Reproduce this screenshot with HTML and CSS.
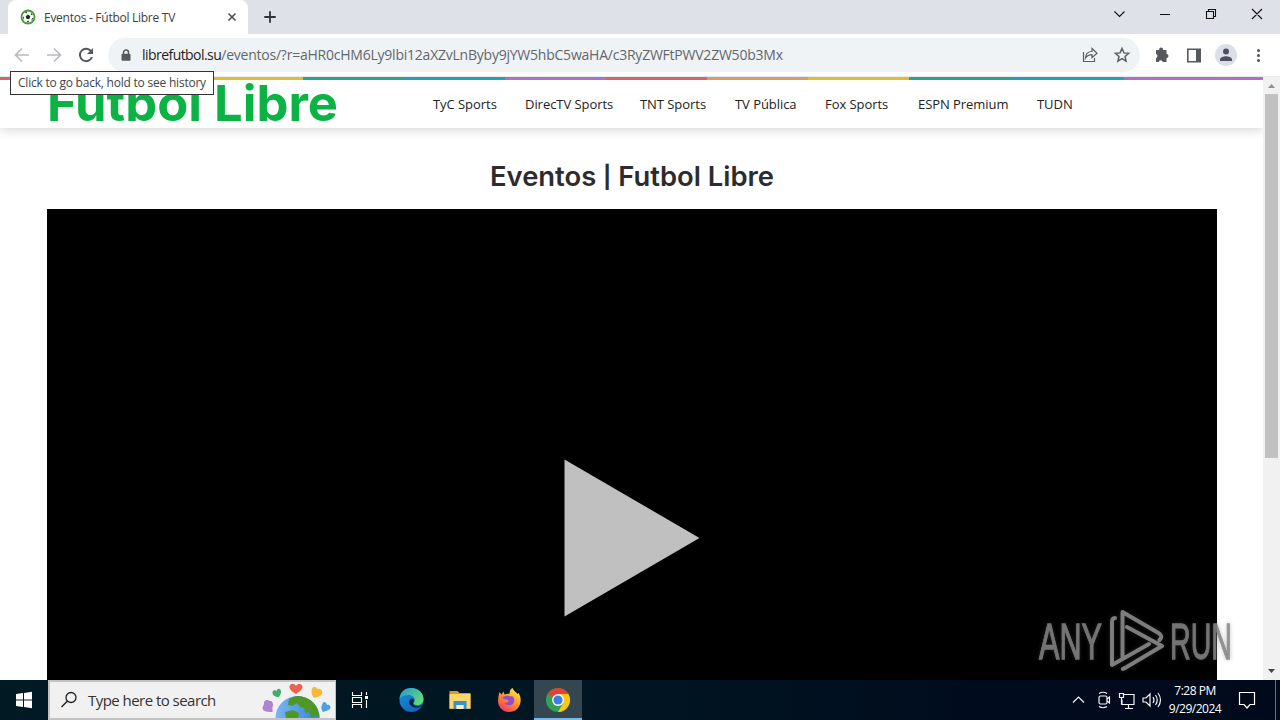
FILE: index.html
```html
<!DOCTYPE html>
<html lang="es">
<head>
<meta charset="utf-8">
<title>Eventos - Fútbol Libre TV</title>
<link rel="stylesheet" href="styles.css">
</head>
<body>
<div class="screen">
  <header class="tabstrip">
    <div class="tab">
      <svg class="favicon" viewBox="0 0 16 16"><circle cx="8" cy="8" r="7.4" fill="#3f9b2f"/><circle cx="8" cy="8" r="5.6" fill="#fff"/><path d="M8 5.5l2.3 1.7-.9 2.7H6.6l-.9-2.7zM5 3.5l2-1-.5 2zM11 3.8l1.9 2-1.7.2zM3 7.2l1.2 1.2L3.4 11zM6.5 12l2.8-.2L8 13.4zM12 9l1.2.5L11.4 12z" fill="#202820"/></svg>
      <span class="tab-title">Eventos - Fútbol Libre TV</span>
      <svg class="tab-close" viewBox="0 0 10 10"><path d="M1.5 1.5l7 7M8.500 1.500l-7 7" stroke="#4b4e52" stroke-width="1.6"/></svg>
    </div>
    <svg class="new-tab" viewBox="0 0 12 12"><path d="M6 .3v11.400M.3 6h11.400" stroke="#303238" stroke-width="1.8"/></svg>
    <svg class="window-controls" viewBox="0 0 160 34" fill="none" stroke="#111" stroke-width="1.100"><path d="M-.5 11.500l5 5 5-5M45 14.500h10"/><path d="M91.500 11.500h7v7h-7zM93.500 11.500v-2h7v7h-2M137 9l10 10M147 9l-10 10"/></svg>
  </header>
  <div class="toolbar">
    <svg class="nav-icons" viewBox="0 0 108 42" fill="none"><g stroke="#b9bbbe" stroke-width="1.700"><path d="M29 21H16M22 14.500L15.500 21l6.500 6.500M47 21h13M54 14.500l6.500 6.500-6.500 6.500"/></g><path d="M91.300 17.500A6.200 6.200 0 1 0 92 23" stroke="#55585c" stroke-width="2"/><path d="M93 14v6h-6z" fill="#55585c"/></svg>
    <div class="omnibox">
      <svg class="lock" viewBox="0 0 10 12"><path d="M2.500 5V3.500a2.500 2.500 0 0 1 5 0V5" fill="none" stroke="#55585c" stroke-width="1.500"/><rect x=".5" y="4.700" width="9" height="7" rx="1" fill="#55585c"/></svg>
      <span class="url"><span class="host">librefutbol.su</span><span class="path">/eventos/?r=aHR0cHM6Ly9lbi12aXZvLnByby9jYW5hbC5waHA/c3RyZWFtPWV2ZW50b3Mx</span></span>
      <svg class="omni-icons" viewBox="0 0 60 34" fill="none" stroke="#5b5f64" stroke-width="1.200"><path d="M3.500 14v9.500h11V20M5.500 20c.3-4 3-6.500 6.500-6.500v-3l5 4.700-5 4.500v-3c-3 0-4.800.8-6.500 3.300z"/><path stroke-width="1.500" d="M42 10.500l1.900 4.400 4.700.4-3.600 3.100 1.100 4.700-4.100-2.500-4.100 2.500 1.100-4.700-3.600-3.100 4.700-.4z"/></svg>
    </div>
    <svg class="toolbar-icons" viewBox="0 0 140 42"><path d="M16 16h3.200a2 2 0 1 1 3.800 0h3.500v4a2 2 0 1 1 0 4v4h-3.700a2.100 2.100 0 0 0-4.100 0H16v-4a2.100 2.100 0 0 0 0-4z" fill="#55585c"/><path d="M47.800 15.200h12.400v12.600H47.800z" fill="none" stroke="#55585c" stroke-width="1.600"/><path d="M56 15h5v13h-5z" fill="#55585c"/><circle cx="86" cy="21" r="11" fill="#dcdfe8"/><circle cx="86" cy="17.500" r="3" fill="#4c5063"/><path d="M80 27v-1.500c0-2 4-3.200 6-3.200s6 1.200 6 3.200V27z" fill="#4c5063"/><g fill="#505357"><circle cx="118.500" cy="16.500" r="1.500"/><circle cx="118.500" cy="21.500" r="1.500"/><circle cx="118.500" cy="26.500" r="1.500"/></g></svg>
  </div>
  <div class="viewport">
    <main class="page">
      <div class="stripe"></div>
      <div class="site-header">
        <svg class="logo" viewBox="0 0 300 48"><text x="-1" y="41" textLength="291" lengthAdjust="spacingAndGlyphs">Futbol Libre</text></svg>
        <nav class="menu"><a>TyC Sports</a><a>DirecTV Sports</a><a>TNT Sports</a><a>TV Pública</a><a>Fox Sports</a><a>ESPN Premium</a><a>TUDN</a></nav>
      </div>
      <svg class="heading" viewBox="0 0 284 40"><text x="0" y="27" textLength="284" lengthAdjust="spacingAndGlyphs">Eventos <tspan class="bar" dy="-1.500">|</tspan><tspan dy="1.500"> Futbol Libre</tspan></text></svg>
      <div class="player"><svg class="play" viewBox="0 0 136 158"><path d="M.5.500L135.500 79 .5 157.500z" fill="#c0c0c0"/></svg></div>
    </main>
    <div class="scrollbar"><svg class="arrow" viewBox="0 0 17 17"><path d="M5 11h7l-3.500-4z" fill="#909090"/></svg><div class="thumb"></div><svg class="arrow" viewBox="0 0 17 17"><path d="M5 6h7l-3.500 4z" fill="#444"/></svg></div>
  </div>
  <footer class="taskbar">
    <svg class="start" viewBox="0 0 48 40"><path d="M16 14l7-1v6.500h-7zM24 12.900l8-1.100v7.700h-8zM16 20.500h7V27l-7-1zM24 20.500h8v7.700l-8-1.100z" fill="#fff"/></svg>
    <div class="search">
      <svg class="magnifier" viewBox="0 0 18 18"><circle cx="11" cy="6.500" r="5" fill="none" stroke="#222" stroke-width="1.300"/><path d="M7.500 10L1.500 16" stroke="#222" stroke-width="1.400"/></svg>
      <span class="search-text">Type here to search</span>
      <svg class="globe" viewBox="0 0 72 36"><defs><clipPath id="earth"><circle cx="36.500" cy="36" r="22"/></clipPath><linearGradient id="sea"><stop stop-color="#7bb4f5"/><stop offset="1" stop-color="#3384d9"/></linearGradient></defs><circle cx="36.500" cy="36" r="22" fill="url(#sea)"/><g clip-path="url(#earth)" fill="#4e9826"><path d="M28 17l9-4 13 3 9 12v7l-5-2-3 3-3-6-4 1-1-5-4-1-3-4-5 3-4-1zM24 30l8-2 6 3-1 5H25z"/></g><path d="M35 12c-3-2-6.500-4-6.500-7 0-4 5-4 6.500-1 2-3 6.500-2.500 6.500 1 0 3-4 5-6.500 7z" fill="#ed624c"/><path d="M18 15c-4 0-7-2-6.500-5 .5-2 3-2.500 4-1 .5-3 4-3 4.500 0 .5 2-1 4-2 6z" fill="#42ae69"/><path d="M51 7c1.500-4 5-2 5 0 4-1 6 2 5 5-1 2-5 3-8 4-2-3-3.500-6-2-9z" fill="#f5b936"/><path d="M3 20c2-3 5-2 5-1 3-1 5 3 3.500 6v5c-4 0-10 0-10-4 0-2 2-3 1.500-6z" fill="#ae83cf"/><path d="M61 23c1-4 4-4 5 0 3-1 4 2 3 4-1 1-4 2-7 3-2-2-2-5-1-7z" fill="#4c9fe0"/></svg>
    </div>
    <svg class="task-view" viewBox="0 0 48 40" fill="none" stroke="#fff" stroke-width="1.100"><path d="M16.500 12v3.500h9V12M16.500 28v-3.500h9V28M16.500 17.500h9v5h-9zM30.500 12v3M30.500 20v8"/><path d="M29 16h3v3h-3z" fill="#fff" stroke="none"/></svg>
    <svg class="app edge" viewBox="0 0 48 40"><defs><linearGradient id="eg" y2=".7"><stop stop-color="#2596d8"/><stop offset="1" stop-color="#61dc72"/></linearGradient><linearGradient id="eb" x2=".7" y2="1"><stop stop-color="#1593dc"/><stop offset="1" stop-color="#1762b8"/></linearGradient></defs><circle cx="24" cy="20" r="12" fill="url(#eb)"/><path d="M12 19C12.500 11 18 8 24 8c7 0 12 5 12 11 0 4-3 6-6 6-3 0-5-1-4-2 3-3 1-7-4-8-4-.5-8 1-10 4z" fill="url(#eg)"/><path d="M26 22c-1 3 2 5 6 4l2.500-1c-2 3-6 3.500-9 2-4-2-5-6-2-8.500 2 0 4 1.500 2.500 3.500z" fill="#08263f"/></svg>
    <svg class="app" viewBox="0 0 48 40"><path d="M13 11h8l2 2h11v16H13z" fill="#d99b20"/><path d="M13 14h21v14.500H13z" fill="#fad66e"/><path d="M17 21h13v8h-3v-4h-7v4h-3z" fill="#3791ce"/><path d="M20 25h7v4h-7z" fill="#f7edd0"/></svg>
    <svg class="app" viewBox="0 0 48 40"><defs><linearGradient id="ff" x1=".8" x2=".2" y2="1"><stop stop-color="#fff044"/><stop offset=".45" stop-color="#ff9b28"/><stop offset="1" stop-color="#f02f64"/></linearGradient></defs><path d="M14 12l2 2.500 2-3 1 3c2-1 4-1 5-.5 0-3 1-5 3-6 1 3 4 4 5 6l1-1c2 3 2.500 6 2 9-1 6-5 10-11.500 10S12.500 27 12.500 21c0-3 .5-6 1.500-9z" fill="url(#ff)"/><path d="M17 17l5-1.500 3 1c3-1 5 3.500 3 6.500-2 3-7 3-9 0 3 0 4-1 4-3l-5-1z" fill="#914bd5"/></svg>
    <div class="active-app"><svg class="app" viewBox="0 0 48 40"><circle cx="24" cy="20" r="12" fill="#32a153"/><path d="M24 20L13.600 14A12 12 0 0 1 34.400 14z" fill="#e44234"/><path d="M24 14h10.400A12 12 0 0 1 24 32l5.200-9z" fill="#fbc817"/><circle cx="24" cy="20" r="5.900" fill="#fff"/><circle cx="24" cy="20" r="4.600" fill="#3b7eea"/></svg></div>
    <svg class="tray" viewBox="0 0 100 40" fill="none" stroke="#f3f5f7" stroke-width="1.200"><path d="M5 22.500l5.500-5.500 5.500 5.500"/><rect x="31" y="16" width="8" height="8" rx="1.500"/><path d="M39 19l2.500-2v6l-2.500-2M31 13.500q4-2.500 8 0M31 26.500q4 2.500 8 0M56 14.500h10v10H54v-5M60.500 25v3M57 28.500h8M51.500 13.500h4v4h-4zM53.500 17.500v7M75 18h3l4-4v12l-4-4h-3zM85 17q2 3 0 6M87.500 15q3.500 5 0 10M90 13q5 7 0 14"/></svg>
    <div class="clock"><span class="time">7:28 PM</span><span class="date">9/29/2024</span></div>
    <svg class="notice" viewBox="0 0 58 40" fill="none" stroke="#fff" stroke-width="1.200"><path d="M17.500 12.500h15v12H28L25 28l-3-3.500h-4.500z"/><path d="M53.500 0v40" stroke="#68717c" stroke-width="1"/></svg>
  </footer>
  <div class="tooltip">Click to go back, hold to see history</div>
  <svg class="watermark" viewBox="0 0 210 76"><g class="brand"><text x="9" y="53" textLength="63" lengthAdjust="spacingAndGlyphs">ANY</text><text x="140" y="53" textLength="62" lengthAdjust="spacingAndGlyphs">RUN</text></g><g fill="none" stroke="#a0a0a0" stroke-opacity=".75" stroke-width="4" stroke-linejoin="round" stroke-linecap="round"><path d="M85 12q-3 0-3 4v43l37-21M92.500 52V6l36 21q5 3 1 7M97 21l35 19-37 22q-3 1-2 1"/></g></svg>
</div>
</body>
</html>
```
FILE: styles.css
```css
* { box-sizing: border-box; }
body { margin: 0; overflow: hidden; font-family: "Open Sans", "Noto Sans", sans-serif; }
svg { display: block; flex: none; }
.screen { position: relative; width: 1280px; height: 720px; display: flex; flex-direction: column; overflow: hidden; background: #fff; }

.tabstrip { display: flex; height: 34px; background: #dee1e8; padding-left: 8px; align-items: center; }
.tab { display: flex; align-items: center; width: 240px; height: 34px; padding: 0 11px 0 12px; background: #fff; border-radius: 8px 8px 0 0; }
.favicon { width: 16px; height: 16px; }
.tab-title { margin-left: 8px; flex: 1; font-size: 12px; letter-spacing: -0.27px; color: #3d4043; white-space: nowrap; }
.tab-close { width: 10px; height: 10px; }
.new-tab { width: 12px; height: 12px; margin-left: 16px; }
.window-controls { width: 160px; height: 34px; margin-left: auto; margin-right: 5px; overflow: visible; }

.toolbar { display: flex; align-items: center; height: 43px; padding-bottom: 1px; background: #fff; border-bottom: 1px solid #e9eaed; }
.nav-icons { width: 108px; height: 42px; }
.omnibox { display: flex; align-items: center; width: 1032px; height: 34px; padding-left: 13px; border-radius: 17px; background: #eff3f6; }
.lock { width: 10px; height: 12px; }
.url { margin-left: 11px; font-size: 14px; white-space: nowrap; color: #63676c; display: flex; }
.host { color: #1d1f22; letter-spacing: -0.55px; }
.path { letter-spacing: -0.23px; }
.omni-icons { width: 60px; height: 34px; margin-left: auto; margin-right: 0; }
.toolbar-icons { width: 140px; height: 42px; }

.viewport { display: flex; height: 603px; }
.page { width: 1263px; height: 603px; overflow: hidden; background: #fff; }
.stripe { position: relative; z-index: 1; height: 3px; background: linear-gradient(90deg, #d8636b 0 101px, #d99a6c 101px 202px, #e1bd2e 202px 303px, #2aa585 303px 404px, #23a2b6 404px 505px, #ae70c6 505px 606px, #d8636b 606px 707px, #d99a6c 707px 808px, #e1bd2e 808px 909px, #2aa585 909px 1010px, #23a2b6 1010px 1124px, #ae70c6 1124px); }
.site-header { display: flex; align-items: center; height: 48px; padding-left: 48px; box-shadow: 0 2px 10px rgba(0, 0, 0, .17); }
.logo { width: 300px; height: 48px; font: 700 50px Inter, sans-serif; fill: #0ab344; overflow: visible; }
.menu { display: grid; grid-template-columns: 92px 115px 95px 90px 93px 119px 40px; margin-left: 85px; font-size: 13px; letter-spacing: -0.05px; color: #222; }
.menu a { white-space: nowrap; }
.heading { width: 284px; height: 40px; margin: 31px 0 0 490px; font: 600 27px Inter, sans-serif; fill: #2c2c2f; overflow: visible; }
.bar { font-size: 22px; font-weight: 700; }
.player { width: 1170px; height: 480px; margin: 10px 0 0 47px; padding: 250px 0 0 517px; background: #000; }
.play { width: 136px; height: 158px; }
.scrollbar { width: 17px; display: flex; flex-direction: column; background: #f1f1f1; }
.arrow { width: 17px; height: 17px; }
.thumb { width: 13px; height: 364px; margin: 0 2px auto; background: #c1c1c1; }

.taskbar { display: flex; height: 40px; background: linear-gradient(90deg, #001a24, #001622 45%, #000b1d 80%, #000a1b); color: #fff; }
.start { width: 48px; height: 40px; }
.search { display: flex; align-items: center; width: 288px; height: 40px; padding-left: 10px; background: #f1f1f1; border: 2px solid #c3c3c3; border-width: 2px 1px 2px 2px; color: #333; }
.magnifier { width: 18px; height: 18px; }
.search-text { margin-left: 10px; font-size: 15px; letter-spacing: -0.54px; white-space: nowrap; }
.globe { width: 72px; height: 36px; margin-left: auto; margin-right: 2px; }
.task-view { width: 48px; height: 40px; }
.app { width: 49px; height: 40px; }
.edge { margin-left: 3px; }
.active-app { width: 48px; height: 40px; background: #34464f; border-bottom: 2px solid #76b9ed; }
.active-app .app { width: 48px; }
.tray { width: 100px; height: 40px; margin-left: auto; }
.clock { width: 54px; display: flex; flex-direction: column; align-items: center; padding-top: 2px; font-size: 12px; line-height: 18px; letter-spacing: -0.5px; white-space: nowrap; }
.notice { width: 58px; height: 40px; }

.tooltip { position: absolute; z-index: 2; left: 10px; top: 71px; width: 204px; height: 24px; padding-left: 7px; border: 1px solid #333; background: #fff; color: #444; font-size: 12px; line-height: 22px; letter-spacing: -0.22px; white-space: nowrap; }
.watermark { position: absolute; z-index: 2; left: 1030px; top: 606px; width: 210px; height: 76px; font: 50px "Liberation Sans", sans-serif; filter: drop-shadow(0 0 2px rgba(90, 90, 90, .45)); }
.brand { fill: #858585; stroke: #858585; stroke-width: 1.3px; opacity: .85; }
```
